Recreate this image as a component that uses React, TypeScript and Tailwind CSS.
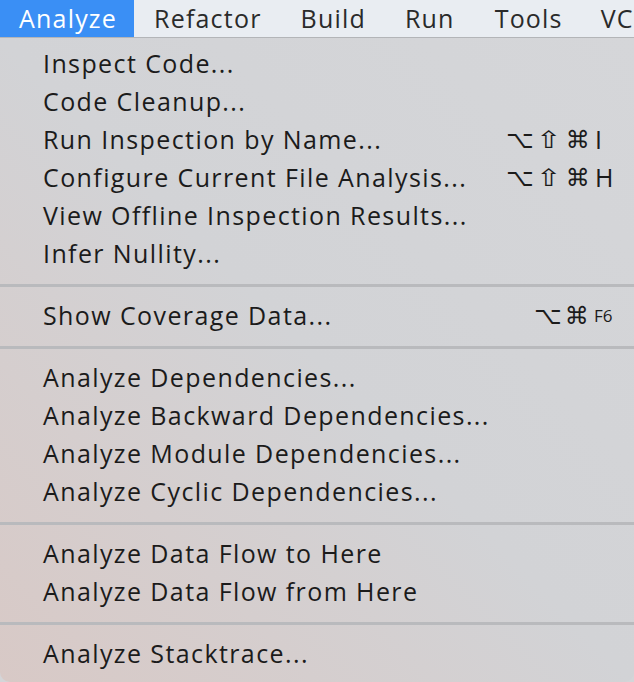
const font = { fontFamily: '"Open Sans", "DejaVu Sans", sans-serif' };

type Item = { label: string; keys?: string[]; fkey?: string };

const groups: Item[][] = [
  [
    { label: "Inspect Code..." },
    { label: "Code Cleanup..." },
    { label: "Run Inspection by Name...", keys: ["⌥", "⇧", "⌘", "I"] },
    { label: "Configure Current File Analysis...", keys: ["⌥", "⇧", "⌘", "H"] },
    { label: "View Offline Inspection Results..." },
    { label: "Infer Nullity..." },
  ],
  [{ label: "Show Coverage Data...", keys: ["⌥", "⌘"], fkey: "F6" }],
  [
    { label: "Analyze Dependencies..." },
    { label: "Analyze Backward Dependencies..." },
    { label: "Analyze Module Dependencies..." },
    { label: "Analyze Cyclic Dependencies..." },
  ],
  [{ label: "Analyze Data Flow to Here" }, { label: "Analyze Data Flow from Here" }],
  [{ label: "Analyze Stacktrace..." }],
];

function Key({ k }: { k: string }) {
  if (k === "⇧") {
    return (
      <span className="inline-block w-[29px] text-center font-['DejaVu_Sans'] text-[24px] leading-none">
        <span className="inline-block scale-x-125">{k}</span>
      </span>
    );
  }
  if (/[A-Z]/.test(k)) {
    return <span className="ml-[2px] text-[25px] tracking-normal">{k}</span>;
  }
  return <span className="inline-block w-[29px] text-center font-['DejaVu_Sans'] text-[24px] leading-none">{k}</span>;
}

function Shortcut({ item }: { item: Item }) {
  if (!item.keys) return null;
  return (
    <span className={`flex w-[128px] items-center ${item.fkey ? "pl-[28px]" : ""}`}>
      {item.keys.map((k) => (
        <Key key={k} k={k} />
      ))}
      {item.fkey ? <span className="ml-[2px] text-[17px] tracking-normal">{item.fkey}</span> : null}
    </span>
  );
}

function Row({ item }: { item: Item }) {
  return (
    <div className="flex h-[38px] items-center justify-between pl-[43px] text-[25px] tracking-[1.4px] text-[#1b1b1b]">
      <span>{item.label}</span>
      <Shortcut item={item} />
    </div>
  );
}

export default function App() {
  return (
    <div className="h-[682px] w-[634px] overflow-hidden bg-[#d4d5d8]" style={font}>
      <nav className="flex h-[38px] items-stretch overflow-hidden whitespace-nowrap border-b border-[#b3b5b8] bg-[#e9edf2] text-[25px] tracking-[1.2px] text-[#2a2a2a]">
        <span className="flex items-center bg-[#3a8ff5] pl-[19px] pr-[17px] text-white">Analyze</span>
        <span className="flex items-center px-[20px]">Refactor</span>
        <span className="flex items-center px-[19px]">Build</span>
        <span className="flex items-center px-[20px]">Run</span>
        <span className="flex items-center px-[20px]">Tools</span>
        <span className="flex items-center px-[18px]">VC</span>
      </nav>
      <div className="h-[644px] rounded-b-[10px] bg-gradient-to-tr from-[#d8c9c6] via-[#d2d3d6] to-[#d5d6d9] pt-[7px]">
        {groups.map((group, gi) => (
          <div key={gi}>
            {gi > 0 ? (
              <div className="flex h-[24px] items-center">
                <div className="h-[3px] w-full bg-[#b9babd]" />
              </div>
            ) : null}
            {group.map((item) => (
              <Row key={item.label} item={item} />
            ))}
          </div>
        ))}
      </div>
    </div>
  );
}
